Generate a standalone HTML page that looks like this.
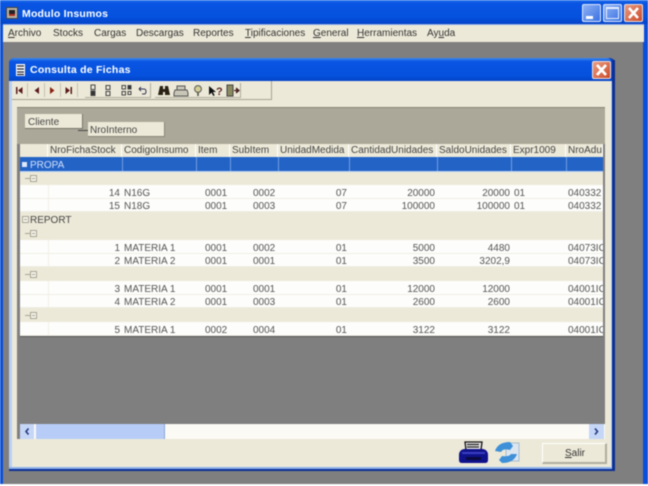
<!DOCTYPE html>
<html><head><meta charset="utf-8">
<style>
html,body{margin:0;padding:0;background:#fff;}
#r{position:relative;width:648px;height:486px;overflow:hidden;background:#fff;font-family:"Liberation Sans",sans-serif;font-size:10px;color:#333;filter:blur(0.5px);}
#r div,#r span.a,#r svg{position:absolute;}
.t{white-space:nowrap;line-height:13px;}
.r{text-align:right;}
.h{top:144px;height:13px;background:#ece9d8;border-right:1px solid #fff;box-sizing:border-box;white-space:nowrap;overflow:hidden;padding-left:2px;line-height:14px;color:#444;}
.m{top:27px;line-height:13px;color:#333;font-size:10px;white-space:nowrap;}
.tb{top:83px;width:16px;height:14px;border-right:1px solid #c4c1b1;box-sizing:border-box;}
.row{left:20px;width:583px;height:14px;}
.w{background:#fdfdfb;border-bottom:1px solid #f0eee4;box-sizing:border-box;}
.b{background:#ece9d8;}
.c{line-height:13px;white-space:nowrap;color:#555;margin-top:1px;}
.vl{width:1px;background:#f1efe6;}
</style></head><body>
<div id="r">
 <div style="left:0;top:0;width:648px;height:24px;background:linear-gradient(#2b78ee 0,#0a55e3 12%,#0552de 70%,#0444c8 100%);"></div>
 <div style="left:0;top:24px;width:648px;height:460px;background:#0a4fdc;"></div>
 <div style="left:3px;top:24px;width:641px;height:18px;background:#ece9d8;border-top:1px solid #8fa9e8;box-sizing:border-box;"></div>
 <div style="left:3px;top:42px;width:640px;height:442px;background:#7f7f7f;"></div>
 <div style="left:0;top:484px;width:648px;height:2px;background:#fdfdfd;"></div>
 <div style="left:6px;top:7px;width:12px;height:12px;background:#b9b3a3;border:1px solid #444;box-sizing:border-box;"></div>
 <div style="left:9px;top:10px;width:6px;height:6px;background:#222;border-bottom:2px solid #b03020;box-sizing:border-box;"></div>
 <div class="t" style="left:22px;top:8px;color:#fff;font-weight:bold;font-size:10.5px;letter-spacing:.2px;">Modulo Insumos</div>

 <div style="left:582px;top:4px;width:19px;height:18px;background:linear-gradient(135deg,#8fb2f4,#3a72e2);border:1px solid #dfe8fb;box-sizing:border-box;border-radius:2px;"></div>
 <div style="left:586px;top:16px;width:7px;height:3px;background:#fff;"></div>
 <div style="left:603px;top:4px;width:19px;height:18px;background:linear-gradient(135deg,#8fb2f4,#3a72e2);border:1px solid #dfe8fb;box-sizing:border-box;border-radius:2px;"></div>
 <div style="left:606px;top:7px;width:13px;height:12px;border:1px solid #e8effd;border-top-width:2px;box-sizing:border-box;"></div>
 <div style="left:624px;top:4px;width:19px;height:18px;background:linear-gradient(135deg,#e99a80,#cb4a28);border:1px solid #f0e0da;box-sizing:border-box;border-radius:2px;"></div>
 <svg style="left:624px;top:4px" width="19" height="18"><path d="M5 4L14 14M14 4L5 14" stroke="#fff" stroke-width="2.6"/></svg>

 <div class="m" style="left:8px;"><u>A</u>rchivo</div>
 <div class="m" style="left:53px;">Stocks</div>
 <div class="m" style="left:94px;">Cargas</div>
 <div class="m" style="left:136px;">Descargas</div>
 <div class="m" style="left:193px;">Reportes</div>
 <div class="m" style="left:245px;"><u>T</u>ipificaciones</div>
 <div class="m" style="left:313px;"><u>G</u>eneral</div>
 <div class="m" style="left:357px;"><u>H</u>erramientas</div>
 <div class="m" style="left:427px;">Ay<u>u</u>da</div>

 <!-- child window -->
 <div style="left:9px;top:58px;width:606px;height:413px;background:#0b3fb4;border-radius:5px 5px 0 0;"></div>
 <div style="left:9px;top:58px;width:603px;height:23px;background:linear-gradient(#3d8af0 0,#0a55e3 15%,#0552de 75%,#0444c8 100%);border-radius:5px 5px 0 0;"></div>
 <div style="left:9px;top:81px;width:3px;height:388px;background:#b9d0f4;"></div>
 <div style="left:12px;top:81px;width:599px;height:387px;background:#ece9d8;"></div>
 <div style="left:9px;top:467px;width:603px;height:2px;background:#8fb2ea;"></div>
 <div style="left:611px;top:81px;width:1px;height:387px;background:#b9d0f4;"></div>
 <div style="left:9px;top:469px;width:606px;height:2px;background:#0b2f96;"></div>
 <div style="left:612px;top:60px;width:3px;height:411px;background:#0b2f96;"></div>
 <svg style="left:15px;top:64px" width="11" height="12"><rect x="1" y="0" width="9" height="12" fill="#fff"/><path d="M2 2H9M2 5H9M2 8H9M2 10.5H9" stroke="#223" stroke-width="1.3"/></svg>
 <div class="t" style="left:30px;top:64px;color:#fff;font-weight:bold;font-size:10.5px;letter-spacing:.25px;">Consulta de Fichas</div>
 <div style="left:592px;top:61px;width:19px;height:18px;background:linear-gradient(135deg,#ec9e84,#cb4a28);border:1px solid #f0e0da;box-sizing:border-box;border-radius:2px;"></div>
 <svg style="left:592px;top:61px" width="19" height="18"><path d="M5 4L14 14M14 4L5 14" stroke="#fff" stroke-width="2.8"/></svg>

 <!-- toolbar -->
 <div style="left:12px;top:81px;width:260px;height:19px;background:#ece9d8;border-right:1px solid #a8a595;border-bottom:1px solid #a8a595;box-sizing:border-box;"></div>
 <div class="tb" style="left:12px;"></div><div class="tb" style="left:29px;"></div><div class="tb" style="left:45px;"></div><div class="tb" style="left:62px;"></div>
 <div style="left:85px;top:83px;width:65px;height:14px;border-bottom:1px solid #b0ad9d;border-right:1px solid #b0ad9d;"></div>
 <div style="left:155px;top:83px;width:85px;height:14px;border-bottom:1px solid #b0ad9d;border-right:1px solid #b0ad9d;"></div>
 <svg style="left:12px;top:82px" width="260" height="17">
  <g fill="#5a1a1a">
   <path d="M4 5h1.500v7H4zM10.500 5v7L6 8.500z"/>
   <path d="M27 5v7L22.500 8.500z"/>
   <path d="M38 5v7L42.500 8.500z" fill="#8a2210"/>
   <path d="M53.500 5v7L58 8.500zM58.500 5H60v7h-1.500z"/>
  </g>
  <g fill="none" stroke="#444" stroke-width="1">
   <rect x="79" y="3" width="4" height="4.500"/><rect x="79" y="9" width="4" height="4.500" fill="#333"/>
   <rect x="94" y="3.500" width="4" height="4"/><rect x="94" y="9.500" width="4" height="4"/>
   <rect x="110" y="3.500" width="3.500" height="3.500"/><rect x="110" y="9.500" width="3.500" height="3.500"/><rect x="116" y="3.500" width="3" height="3.500" fill="#333"/><path d="M116 9.500h3v3h-3z"/>
   <path d="M127 7h5q2 0 2 2.500t-2 2.500h-2M127 7l2-2M127 7l2 2" stroke="#335"/>
  </g>
  <g fill="#2a2214"><path d="M148 4h3v9h-5zM153 4h3l2 9h-5zM150 7h4v3h-4z"/></g>
  <path d="M163 8h12l1 3v3h-14v-3zM165 4h8v4h-8z" fill="#c9c6b8" stroke="#555"/>
  <circle cx="186" cy="7" r="3.400" fill="#d4cf96" stroke="#555"/><path d="M186 10v4" stroke="#554" stroke-width="1.600"/>
  <path d="M197 4v9l2.500-2.400 1.800 3.400 1.400-.8-1.800-3.200H204z" fill="#111"/>
  <text x="204" y="13" font-family="Liberation Sans" font-weight="bold" font-size="11" fill="#602a2a">?</text>
  <rect x="215" y="3" width="6" height="11" fill="#8c8a60" stroke="#444"/>
  <path d="M222 8.500h4M224 6l3 2.500-3 2.500" stroke="#422" fill="#722" stroke-width="1.200"/>
 </svg>

 <!-- group panel -->
 <div style="left:17px;top:107px;width:588px;height:37px;background:#aca899;border-top:1px solid #8a8778;box-sizing:border-box;"></div>
 <div style="left:25px;top:114px;width:58px;height:15px;background:#ece9d8;border-right:1px solid #77756a;border-bottom:1px solid #77756a;box-sizing:border-box;"></div>
 <div class="t" style="left:28px;top:116px;color:#444;">Cliente</div>
 <div style="left:78px;top:130px;width:10px;height:1px;background:#444;"></div>
 <div style="left:88px;top:122px;width:77px;height:15px;background:#ece9d8;border-right:1px solid #8a8778;border-bottom:1px solid #8a8778;box-sizing:border-box;"></div>
 <div class="t" style="left:90px;top:124px;color:#444;">NroInterno</div>

 <!-- grid header -->
 <div style="left:17px;top:144px;width:3px;height:295px;background:#7f7f7f;"></div>
 <div style="left:603px;top:144px;width:2px;height:295px;background:#7f7f7f;"></div>
 <div class="h" style="left:20px;width:28px;"></div>
 <div class="h" style="left:48px;width:74px;">NroFichaStock</div>
 <div class="h" style="left:122px;width:74px;">CodigoInsumo</div>
 <div class="h" style="left:196px;width:34px;">Item</div>
 <div class="h" style="left:230px;width:48px;">SubItem</div>
 <div class="h" style="left:278px;width:71px;">UnidadMedida</div>
 <div class="h" style="left:349px;width:88px;">CantidadUnidades</div>
 <div class="h" style="left:437px;width:74px;">SaldoUnidades</div>
 <div class="h" style="left:511px;width:55px;">Expr1009</div>
 <div class="h" style="left:566px;width:37px;">NroAdu</div>

 <!-- rows -->
 <div class="row" style="top:157px;background:#2463c6;border-bottom:1px solid #b7d2f2;box-sizing:border-box;height:15px;"></div>
 <div class="vl" style="left:122px;top:157px;height:14px;background:#6f9be0;"></div>
 <div class="vl" style="left:196px;top:157px;height:14px;background:#6f9be0;"></div>
 <div class="vl" style="left:230px;top:157px;height:14px;background:#6f9be0;"></div>
 <div class="vl" style="left:278px;top:157px;height:14px;background:#6f9be0;"></div>
 <div class="vl" style="left:349px;top:157px;height:14px;background:#6f9be0;"></div>
 <div class="vl" style="left:437px;top:157px;height:14px;background:#6f9be0;"></div>
 <div class="vl" style="left:511px;top:157px;height:14px;background:#6f9be0;"></div>
 <div class="vl" style="left:566px;top:157px;height:14px;background:#6f9be0;"></div>
 <div style="left:22px;top:162px;width:5px;height:5px;background:#dfe8f8;"></div>
 <div class="c" style="left:30px;top:158px;color:#cfe0fa;">PROPA</div>

 <div class="row b" style="top:172px;height:13px;"></div>
 <div class="row w" style="top:185px;"></div>
 <div class="row w" style="top:199px;height:13px;"></div>
 <div class="row b" style="top:212px;"></div>
 <div class="row b" style="top:226px;"></div>
 <div class="row w" style="top:240px;"></div>
 <div class="row w" style="top:254px;height:13px;"></div>
 <div class="row b" style="top:267px;"></div>
 <div class="row w" style="top:281px;"></div>
 <div class="row w" style="top:295px;height:13px;"></div>
 <div class="row b" style="top:308px;"></div>
 <div class="row w" style="top:322px;"></div>
 <div style="left:20px;top:336px;width:583px;height:1px;background:#555;"></div>

 <div class="vl" style="left:48px;top:185px;height:27px;"></div>
 <div class="vl" style="left:48px;top:240px;height:27px;"></div>
 <div class="vl" style="left:48px;top:281px;height:27px;"></div>
 <div class="vl" style="left:48px;top:322px;height:14px;"></div>

 <svg style="left:20px;top:172px" width="30" height="165">
  <g fill="none" stroke="#a8a595" stroke-width="1">
   <rect x="10.500" y="3.500" width="6" height="6" fill="#f5f3ea"/><path d="M5 6.500h5M12 6.500h3" />
   <rect x="2.500" y="44.500" width="6" height="6" fill="#f5f3ea"/><path d="M4 47.500h3"/>
   <rect x="10.500" y="58.500" width="6" height="6" fill="#f5f3ea"/><path d="M5 61.500h5M12 61.500h3"/>
   <rect x="10.500" y="99.500" width="6" height="6" fill="#f5f3ea"/><path d="M5 102.500h5M12 102.500h3"/>
   <rect x="10.500" y="140.500" width="6" height="6" fill="#f5f3ea"/><path d="M5 143.500h5M12 143.500h3"/>
  </g>
 </svg>
 <div class="c" style="left:30px;top:213px;color:#444;">REPORT</div>

 <!-- data -->
 <div class="c r" style="left:60px;width:60px;top:186px;">14</div><div class="c" style="left:124px;top:186px;">N16G</div><div class="c" style="left:205px;top:186px;">0001</div><div class="c" style="left:253px;top:186px;">0002</div><div class="c r" style="left:300px;width:47px;top:186px;">07</div><div class="c r" style="left:370px;width:65px;top:186px;">20000</div><div class="c r" style="left:445px;width:65px;top:186px;">20000</div><div class="c" style="left:514px;top:186px;">01</div><div class="c" style="left:568px;top:186px;width:35px;overflow:hidden;">040332</div>
 <div class="c r" style="left:60px;width:60px;top:199px;">15</div><div class="c" style="left:124px;top:199px;">N18G</div><div class="c" style="left:205px;top:199px;">0001</div><div class="c" style="left:253px;top:199px;">0003</div><div class="c r" style="left:300px;width:47px;top:199px;">07</div><div class="c r" style="left:370px;width:65px;top:199px;">100000</div><div class="c r" style="left:445px;width:65px;top:199px;">100000</div><div class="c" style="left:514px;top:199px;">01</div><div class="c" style="left:568px;top:199px;width:35px;overflow:hidden;">040332</div>

 <div class="c r" style="left:60px;width:60px;top:241px;">1</div><div class="c" style="left:124px;top:241px;">MATERIA 1</div><div class="c" style="left:205px;top:241px;">0001</div><div class="c" style="left:253px;top:241px;">0002</div><div class="c r" style="left:300px;width:47px;top:241px;">01</div><div class="c r" style="left:370px;width:65px;top:241px;">5000</div><div class="c r" style="left:445px;width:65px;top:241px;">4480</div><div class="c" style="left:568px;top:241px;width:35px;overflow:hidden;">04073IC</div>
 <div class="c r" style="left:60px;width:60px;top:254px;">2</div><div class="c" style="left:124px;top:254px;">MATERIA 2</div><div class="c" style="left:205px;top:254px;">0001</div><div class="c" style="left:253px;top:254px;">0001</div><div class="c r" style="left:300px;width:47px;top:254px;">01</div><div class="c r" style="left:370px;width:65px;top:254px;">3500</div><div class="c r" style="left:445px;width:65px;top:254px;">3202,9</div><div class="c" style="left:568px;top:254px;width:35px;overflow:hidden;">04073IC</div>

 <div class="c r" style="left:60px;width:60px;top:282px;">3</div><div class="c" style="left:124px;top:282px;">MATERIA 1</div><div class="c" style="left:205px;top:282px;">0001</div><div class="c" style="left:253px;top:282px;">0001</div><div class="c r" style="left:300px;width:47px;top:282px;">01</div><div class="c r" style="left:370px;width:65px;top:282px;">12000</div><div class="c r" style="left:445px;width:65px;top:282px;">12000</div><div class="c" style="left:568px;top:282px;width:35px;overflow:hidden;">04001IC</div>
 <div class="c r" style="left:60px;width:60px;top:295px;">4</div><div class="c" style="left:124px;top:295px;">MATERIA 2</div><div class="c" style="left:205px;top:295px;">0001</div><div class="c" style="left:253px;top:295px;">0003</div><div class="c r" style="left:300px;width:47px;top:295px;">01</div><div class="c r" style="left:370px;width:65px;top:295px;">2600</div><div class="c r" style="left:445px;width:65px;top:295px;">2600</div><div class="c" style="left:568px;top:295px;width:35px;overflow:hidden;">04001IC</div>

 <div class="c r" style="left:60px;width:60px;top:323px;">5</div><div class="c" style="left:124px;top:323px;">MATERIA 1</div><div class="c" style="left:205px;top:323px;">0002</div><div class="c" style="left:253px;top:323px;">0004</div><div class="c r" style="left:300px;width:47px;top:323px;">01</div><div class="c r" style="left:370px;width:65px;top:323px;">3122</div><div class="c r" style="left:445px;width:65px;top:323px;">3122</div><div class="c" style="left:568px;top:323px;width:35px;overflow:hidden;">04001IC</div>

 <!-- empty grid -->
 <div style="left:17px;top:337px;width:588px;height:87px;background:#7f7f7f;"></div>

 <!-- scrollbar -->
 <div style="left:20px;top:424px;width:585px;height:15px;background:#fbfaf5;"></div>
 <div style="left:20px;top:424px;width:14px;height:15px;background:#c5d6f6;"></div>
 <div style="left:36px;top:424px;width:129px;height:15px;background:#b7cdf8;border-right:1px solid #8da5d8;box-sizing:border-box;"></div>
 <div style="left:589px;top:424px;width:15px;height:15px;background:#c5d6f6;"></div>
 <svg style="left:20px;top:424px" width="14" height="15"><path d="M8.500 4.500L6 7.500 8.500 10.500" fill="none" stroke="#243a80" stroke-width="1.600"/></svg>
 <svg style="left:589px;top:424px" width="15" height="15"><path d="M6 4.500L8.500 7.500 6 10.500" fill="none" stroke="#243a80" stroke-width="1.600"/></svg>

 <!-- bottom icons -->
 <svg style="left:459px;top:441px" width="30" height="23">
  <path d="M6 1h17l-1 8H7z" fill="#e8e8e8" stroke="#111" stroke-width="1.300"/>
  <path d="M8 3.500h12M8 6h12" stroke="#222" stroke-width="1.200"/>
  <path d="M0 14q0-5 5-6h19q5 1 5 6v5q0 3-3 3H3q-3 0-3-3z" fill="#10128c"/>
  <path d="M3 12h23" stroke="#3a3ec0" stroke-width="2"/>
  <rect x="7" y="16" width="15" height="3" fill="#0a0a40"/>
 </svg>
 <svg style="left:493px;top:441px" width="27" height="23">
  <rect x="13" y="2" width="13" height="18" fill="#dce6f0" stroke="#a8bccf"/>
  <path d="M2 10Q5 1 17 1l3 4-3 4q-7-2-9 2z" fill="#3e90d8"/>
  <path d="M24 13Q21 22 9 22l-3-3 3-4q7 1 9-2z" fill="#3e90d8"/>
 </svg>

 <!-- Salir -->
 <div style="left:542px;top:443px;width:65px;height:21px;background:#ece9d8;border-top:1px solid #fff;border-left:1px solid #fff;border-right:2px solid #b0ad9d;border-bottom:2px solid #b0ad9d;box-sizing:border-box;"></div>
 <div class="t" style="left:565px;top:447px;color:#333;"><u>S</u>alir</div>
</div>
</body></html>
